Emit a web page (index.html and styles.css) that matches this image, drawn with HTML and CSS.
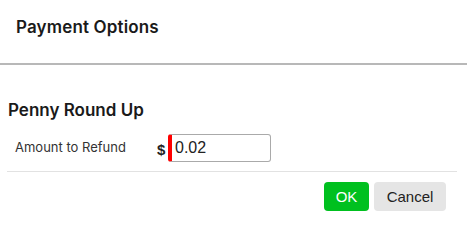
FILE: index.html
```html
<!DOCTYPE html>
<html>
<head>
<meta charset="utf-8">
<link rel="stylesheet" href="styles.css">
</head>
<body>
<div class="dialog">
  <div class="header">Payment Options</div>
  <div class="content">
    <h2 class="section-title">Penny Round Up</h2>
    <div class="row">
      <div class="label">Amount to Refund</div>
      <div class="field">
        <span class="currency">$</span>
        <input class="amount" type="text" value="0.02">
      </div>
    </div>
    <div class="actions">
      <button class="btn btn-ok">OK</button>
      <button class="btn btn-cancel">Cancel</button>
    </div>
  </div>
</div>
</body>
</html>
```
FILE: styles.css
```css
html, body {
  margin: 0;
  padding: 0;
  background: #fff;
}
.dialog {
  width: 467px;
  font-family: Inter, "Liberation Sans", sans-serif;
  color: #1a1a1a;
}
.header {
  height: 65px;
  box-sizing: border-box;
  padding: 17px 16px 0;
  font-size: 17px;
  font-weight: 600;
  line-height: 20px;
  letter-spacing: 0.15px;
  border-bottom: 2px solid #b8b8b8;
}
.content {
  padding: 35px 0 0 7px;
}
.section-title {
  margin: 0;
  padding-left: 1px;
  font-size: 17px;
  font-weight: 600;
  line-height: 20px;
}
.row {
  display: flex;
  align-items: flex-start;
  padding: 14px 0 9px 8px;
  border-bottom: 1px solid #e2e2e2;
  margin-right: 10px;
}
.label {
  width: 142px;
  font-size: 13px;
  line-height: 16px;
  color: #333;
  padding-top: 5px;
}
.field {
  display: flex;
  align-items: center;
}
.currency {
  font-family: "Liberation Sans", Arial, sans-serif;
  font-weight: bold;
  font-size: 15px;
  color: #222;
  width: 11px;
  padding-top: 2px;
}
.amount {
  width: 103px;
  height: 28px;
  box-sizing: border-box;
  border: 1px solid #aaa;
  border-left: 4px solid #f00;
  border-radius: 3px;
  padding: 0 3px;
  font-family: "Liberation Sans", Arial, sans-serif;
  font-size: 16px;
  color: #222;
  outline: none;
}
.actions {
  display: flex;
  justify-content: flex-end;
  gap: 5px;
  padding: 10px 21px 0 0;
}
.btn {
  height: 29px;
  border: none;
  border-radius: 4px;
  font-family: "Liberation Sans", Arial, sans-serif;
  font-size: 15px;
  padding: 0;
  cursor: pointer;
}
.btn-ok {
  width: 45px;
  background: #00c01f;
  color: #fff;
}
.btn-cancel {
  width: 72px;
  background: #e5e5e5;
  color: #222;
}
```
